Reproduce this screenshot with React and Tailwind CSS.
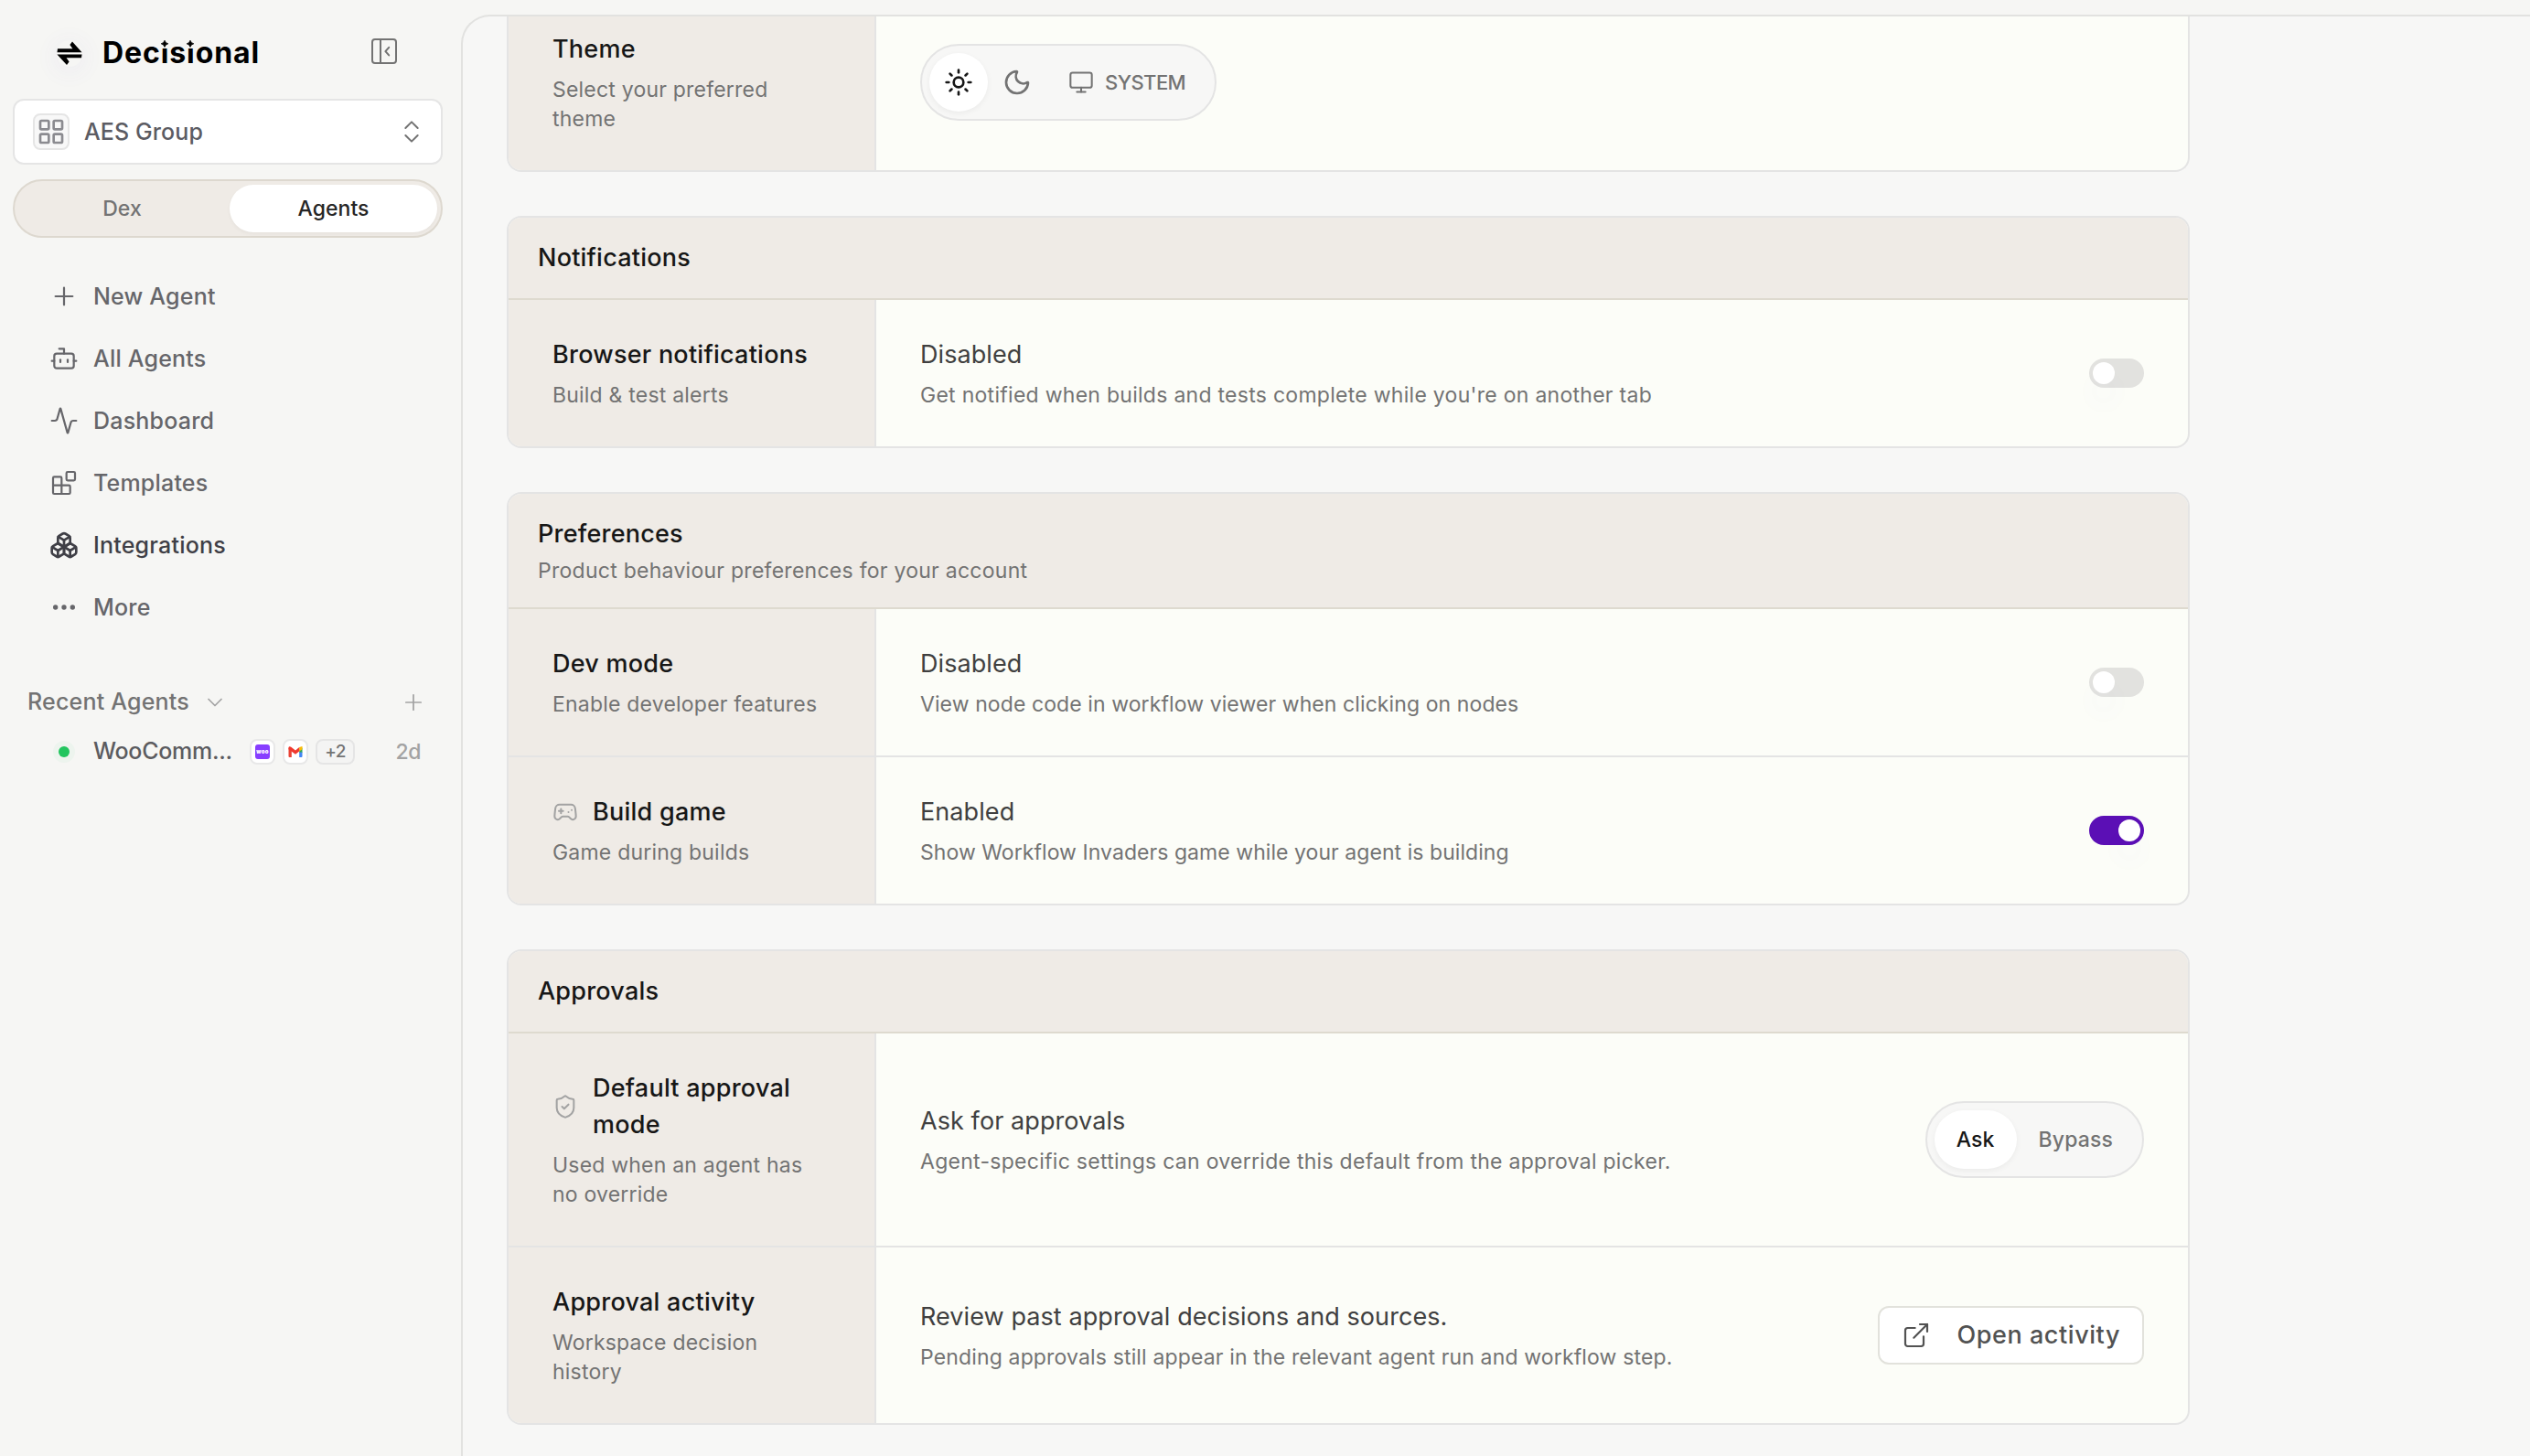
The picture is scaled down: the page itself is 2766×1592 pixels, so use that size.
import React, { useState } from "react";
import clsx from "clsx";
import {
    Activity,
    Bot,
    Boxes,
    ChevronDown,
    ChevronsUpDown,
    Ellipsis,
    ExternalLink,
    Gamepad2,
    LayoutGrid,
    Monitor,
    Moon,
    Plus,
    ShieldCheck,
    Sun,
} from "lucide-react";

const LogoMark = () => (
    <svg
        viewBox="0 0 28 29"
        className="w-7 h-[29px] rounded-full shadow-[0_4px_24px_4px_rgba(90,80,200,0.05)]"
        fill="#000"
    >
        <path d="M0.4 13.2 0.9 9.3H17.4L14.4 5 17 1.6 27.6 13.2Z" />
        <path d="M27.6 15.4 27.1 19.3H10.6L13.6 23.6 11 27 0.4 15.4Z" />
    </svg>
);

// The wordmark's "i" carries a four-pointed star instead of a dot
const StarI = () => (
    <span className="relative">
        i
        <svg
            viewBox="0 0 10 10"
            className="absolute left-1/2 top-[5px] -ml-[5.5px] w-2.5 h-2.5"
        >
            <rect width="10" height="10" fill="#f6f6f4" />
            <path
                d="M5 1.2Q5.7 4.1 8.8 4.8 5.7 5.5 5 8.4 4.3 5.5 1.2 4.8 4.3 4.1 5 1.2Z"
                fill="#000"
                stroke="#000"
                strokeWidth="0.8"
            />
        </svg>
    </span>
);

const PanelIcon = () => (
    <svg
        viewBox="0 0 28 28"
        className="w-7 h-7 text-[#737373]"
        fill="none"
        stroke="currentColor"
        strokeWidth="2"
        strokeLinecap="round"
        strokeLinejoin="round"
    >
        <rect x="1" y="1" width="26" height="26" rx="3" />
        <path d="M10 1v26" />
        <path d="m19.2 9.8-3.8 4.3 3.8 4.3" />
    </svg>
);

const TemplatesIcon = ({ className, strokeWidth }) => (
    <svg
        viewBox="0 0 24 24"
        className={className}
        fill="none"
        stroke="currentColor"
        strokeWidth={strokeWidth}
        strokeLinecap="round"
        strokeLinejoin="round"
    >
        <rect width="7" height="7" x="14" y="3" rx="1" />
        <path d="M10 21V8a1 1 0 0 0-1-1H4a1 1 0 0 0-1 1v12a1 1 0 0 0 1 1h12a1 1 0 0 0 1-1v-5a1 1 0 0 0-1-1H3" />
    </svg>
);

const GmailIcon = () => (
    <svg viewBox="0 0 16 12" className="w-4 h-3">
        <path d="M0.5 1.5 3.8 4V12H1.5Q0.5 12 0.5 11Z" fill="#ea4335" />
        <path d="M12.2 4 15.5 1.5V7H12.2Z" fill="#34a853" />
        <path d="M12.2 6.5H15.5V11Q15.5 12 14.5 12H12.2Z" fill="#4285f4" />
        <path d="M12.2 1 15.5 0V3.2L12.2 5.5Z" fill="#fbbc04" />
        <path
            d="M0.5 1.6Q0.8-0.4 3.2 0.7L8 4.4 12.2 1.1V5.6L8 8.8 0.5 3.2Z"
            fill="#f0392f"
        />
    </svg>
);

const navItems = [
    { label: "New Agent", icon: Plus },
    { label: "All Agents", icon: Bot },
    { label: "Dashboard", icon: Activity },
    { label: "Templates", icon: TemplatesIcon },
    { label: "Integrations", icon: Boxes, active: true },
    { label: "More", icon: Ellipsis, bold: true },
];

const Sidebar = () => {
    const [tab, setTab] = useState("Agents");

    return (
        <aside className="w-[504px] shrink-0 pl-3.5 pr-5 text-[25px] font-medium tracking-[0.008em]">
            <div className="h-[108px] pt-2 pl-12 pr-[50px] flex items-center">
                <LogoMark />
                <span className="ml-[22px] text-[32px] font-bold text-black tracking-[0.028em] leading-10">
                    Dec
                    <StarI />s<StarI />
                    onal
                </span>
                <button className="ml-auto mb-1">
                    <PanelIcon />
                </button>
            </div>

            <button className="w-full h-[72px] pl-5 pr-4 flex items-center bg-white border-2 border-[#e5e5e5] rounded-xl text-[#5c5c63]">
                <span className="w-10 h-10 rounded-lg border-2 border-[#e5e5e5] bg-[#f8f8f8] flex items-center justify-center text-[#8b8b90]">
                    <LayoutGrid className="w-8 h-8 shrink-0" />
                </span>
                <span className="ml-4 pt-0.5 tracking-[0.004em]">
                    AES Group
                </span>
                <ChevronsUpDown
                    className="ml-auto w-8 h-8 text-[#737373]"
                    strokeWidth={1.5}
                />
            </button>

            <div className="mt-4 h-16 p-1 grid grid-cols-2 gap-1 rounded-full border-2 border-[#ddd8cf] bg-[#efebe6] text-[23px]">
                {["Dex", "Agents"].map((name) => (
                    <button
                        key={name}
                        onClick={() => setTab(name)}
                        className={clsx(
                            "rounded-full tracking-[0.002em]",
                            tab === name
                                ? "bg-white text-[#262626] shadow-[0_2px_4px_rgba(0,0,0,0.04)]"
                                : "text-[#737373]",
                        )}
                    >
                        {name}
                    </button>
                ))}
            </div>

            <nav className="mt-[30px]">
                {navItems.map(({ label, icon: Icon, active, bold }) => (
                    <a
                        key={label}
                        className={clsx(
                            "h-[68px] pl-10 flex items-center gap-4",
                            active ? "text-[#3f3f46]" : "text-[#66666a]",
                        )}
                    >
                        <Icon
                            className="w-8 h-8"
                            strokeWidth={active || bold ? 2 : 1.65}
                        />
                        <span className="pt-px">{label}</span>
                    </a>
                ))}
            </nav>

            <div className="mt-[38px] h-16 pl-4 pr-[18px] flex items-center text-[#737373]">
                <span>Recent Agents</span>
                <ChevronDown
                    className="ml-3.5 w-7 h-7 text-[#a3a3a3]"
                    strokeWidth={1.5}
                />
                <Plus
                    className="ml-auto w-7 h-7 text-[#a3a3a3]"
                    strokeWidth={1.5}
                />
            </div>

            <div className="-mt-1 h-[52px] pl-[50px] pr-6 flex items-center text-[#5c5c60]">
                <span className="w-3 h-3 rounded-full bg-[#22c55e] shadow-[0_0_0_6px_rgba(34,197,94,0.04)]" />
                <span className="ml-[26px] w-[155px] tracking-[-0.011em] whitespace-nowrap">
                    WooComm...
                </span>
                <span className="ml-4 w-7 h-7 rounded-lg border-2 border-[#e8e8e8] bg-white flex items-center justify-center">
                    <span className="w-4 h-4 rounded-[3px] bg-[#873eff] text-white text-[6px] leading-none font-black flex items-center justify-center">
                        woo
                    </span>
                </span>
                <span className="ml-2 w-7 h-7 rounded-lg border-2 border-[#e8e8e8] bg-white flex items-center justify-center">
                    <GmailIcon />
                </span>
                <span className="ml-2 w-[43px] h-7 rounded-lg border-2 border-[#e5e5e5] bg-[#f4f4f3] text-[#737373] text-[19px] tracking-[-0.03em] flex items-center justify-center">
                    +2
                </span>
                <span className="ml-auto text-[23px] tracking-[-0.02em] text-[#a3a3a3]">
                    2d
                </span>
            </div>
        </aside>
    );
};

const Card = ({ title, description, className, children }) => (
    <section
        className={clsx(
            "w-[1840px] border-2 border-[#e4e4e4] bg-[#fcfdf8] overflow-hidden",
            className,
        )}
    >
        {title && (
            <header className="px-8 py-6 bg-[#efebe6] border-b-2 border-[#dedacf]">
                <h2 className="text-[27px] leading-10 font-medium text-[#171717] tracking-[0.008em]">
                    {title}
                </h2>
                {description && (
                    <p className="mt-1 text-[23px] leading-8 text-[#737373] tracking-[0.0115em]">
                        {description}
                    </p>
                )}
            </header>
        )}
        <div className="divide-y-2 divide-[#e4e4e4]">{children}</div>
    </section>
);

const Row = ({
    icon: Icon,
    title,
    hint,
    label,
    description,
    tracking = "tracking-[0.012em]",
    children,
}) => (
    <div className="flex">
        <div className="w-[402px] shrink-0 px-12 py-10 bg-[#efebe6] border-r-2 border-[#e4e4e4]">
            <div className="flex items-center gap-4">
                {Icon && (
                    <Icon
                        className="w-7 h-7 shrink-0 text-[#a3a3a3]"
                        strokeWidth={1.75}
                    />
                )}
                <h3 className="text-[27px] leading-10 font-medium text-[#171717] tracking-[0.009em]">
                    {title}
                </h3>
            </div>
            <p className="mt-2 text-[23px] leading-8 text-[#737373] tracking-[0.009em]">
                {hint}
            </p>
        </div>
        <div className="grow px-12 flex items-center justify-between">
            {label && (
                <div>
                    <p className="text-[27px] leading-10 text-[#404040] tracking-[0.003em]">
                        {label}
                    </p>
                    <p
                        className={clsx(
                            "mt-2 text-[23px] leading-8 text-[#737373]",
                            tracking,
                        )}
                    >
                        {description}
                    </p>
                </div>
            )}
            {children}
        </div>
    </div>
);

const Toggle = ({ defaultOn = false }) => {
    const [on, setOn] = useState(defaultOn);

    return (
        <button
            role="switch"
            aria-checked={on}
            onClick={() => setOn(!on)}
            className={clsx(
                "w-[60px] h-8 p-1 rounded-full flex",
                on ? "bg-[#5b0fb5] justify-end" : "bg-[#e2e2df]",
            )}
        >
            <span className="w-6 h-6 rounded-full bg-white shadow-[0_20px_30px_-4px_rgba(100,100,220,0.08)]" />
        </button>
    );
};

const Segmented = ({ options, defaultValue }) => {
    const [value, setValue] = useState(defaultValue);

    return (
        <div className="h-[84px] p-2 flex rounded-full border-2 border-[#e4e4e4] bg-[#f7f7f6] text-[23px] font-medium">
            {options.map(({ id, label, icon: Icon, iconOnly }) => (
                <button
                    key={id}
                    onClick={() => setValue(id)}
                    className={clsx(
                        "h-16 rounded-full flex items-center justify-center gap-3",
                        iconOnly ? "w-16" : "px-6",
                        value === id
                            ? "bg-white text-[#171717] shadow-[0_2px_6px_rgba(0,0,0,0.05)]"
                            : "text-[#737373]",
                    )}
                >
                    {Icon && (
                        <Icon
                            className={iconOnly ? "w-8 h-8" : "w-7 h-7"}
                            strokeWidth={iconOnly ? 2 : 1.75}
                        />
                    )}
                    {label && (
                        <span
                            className={clsx(
                                "whitespace-nowrap",
                                Icon
                                    ? "text-[22px] tracking-[-0.025em]"
                                    : "tracking-[0.006em]",
                            )}
                        >
                            {label}
                        </span>
                    )}
                </button>
            ))}
        </div>
    );
};

const themeOptions = [
    { id: "light", icon: Sun, iconOnly: true },
    { id: "dark", icon: Moon, iconOnly: true },
    { id: "system", label: "SYSTEM", icon: Monitor },
];

const approvalOptions = [
    { id: "ask", label: "Ask" },
    { id: "bypass", label: "Bypass" },
];

export default function App() {
    return (
        <div className="w-[2766px] h-[1592px] flex overflow-hidden bg-[#f6f6f4] font-['Inter',sans-serif]">
            <Sidebar />

            <main className="grow mt-4 h-[1640px] rounded-tl-[32px] border-t-2 border-l-2 border-[#e2e2e0] bg-[#f7f7f6] pl-12 overflow-hidden">
                {/* scrolled down, so this card starts above the fold */}
                <Card className="-mt-6 border-t-0 rounded-b-2xl">
                    <Row title="Theme" hint="Select your preferred theme">
                        <Segmented
                            options={themeOptions}
                            defaultValue="light"
                        />
                    </Row>
                </Card>

                <Card title="Notifications" className="mt-12 rounded-2xl">
                    <Row
                        title="Browser notifications"
                        hint="Build & test alerts"
                        label="Disabled"
                        description="Get notified when builds and tests complete while you're on another tab"
                    >
                        <Toggle />
                    </Row>
                </Card>

                <Card
                    title="Preferences"
                    description="Product behaviour preferences for your account"
                    className="mt-12 rounded-2xl"
                >
                    <Row
                        title="Dev mode"
                        hint="Enable developer features"
                        label="Disabled"
                        description="View node code in workflow viewer when clicking on nodes"
                        tracking="tracking-[0.004em]"
                    >
                        <Toggle />
                    </Row>
                    <Row
                        icon={Gamepad2}
                        title="Build game"
                        hint="Game during builds"
                        label="Enabled"
                        description="Show Workflow Invaders game while your agent is building"
                        tracking="tracking-[0.0025em]"
                    >
                        <Toggle defaultOn />
                    </Row>
                </Card>

                <Card title="Approvals" className="mt-12 rounded-2xl">
                    <Row
                        icon={ShieldCheck}
                        title="Default approval mode"
                        hint="Used when an agent has no override"
                        label="Ask for approvals"
                        description="Agent-specific settings can override this default from the approval picker."
                    >
                        <Segmented
                            options={approvalOptions}
                            defaultValue="ask"
                        />
                    </Row>
                    <Row
                        title="Approval activity"
                        hint="Workspace decision history"
                        label="Review past approval decisions and sources."
                        description="Pending approvals still appear in the relevant agent run and workflow step."
                        tracking="tracking-[0.0065em]"
                    >
                        <button className="h-16 px-6 flex items-center gap-7 rounded-xl border-2 border-[#e2e2dc] bg-white text-[27px] font-medium text-[#525252] tracking-[0.021em]">
                            <ExternalLink
                                className="w-8 h-8"
                                strokeWidth={1.65}
                            />
                            Open activity
                        </button>
                    </Row>
                </Card>
            </main>
        </div>
    );
}
